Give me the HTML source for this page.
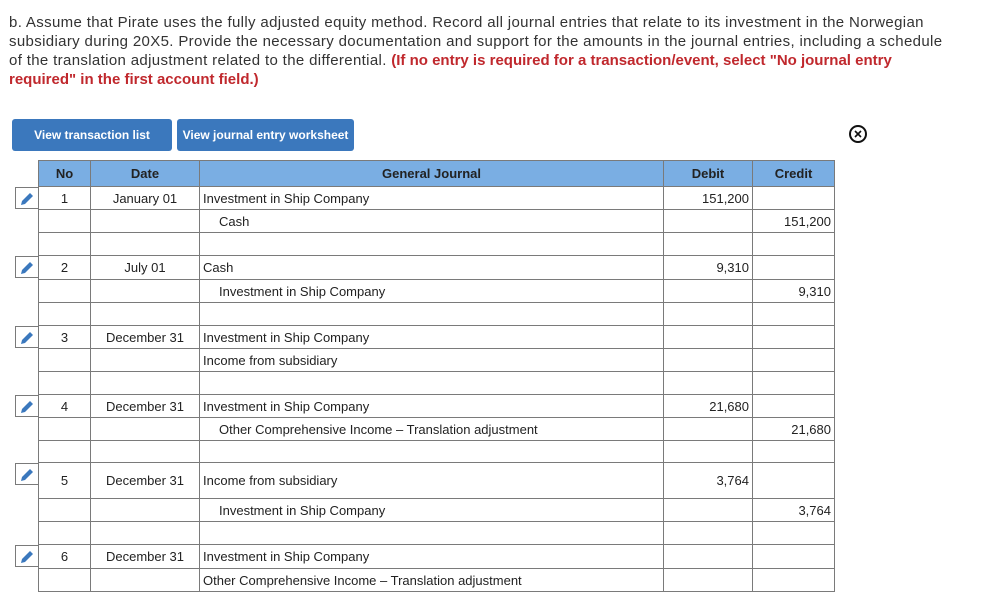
<!DOCTYPE html>
<html><head><meta charset="utf-8"><style>
body{margin:0;background:#fff;font-family:"Liberation Sans",Arial,sans-serif;}
.q{position:absolute;left:9px;top:13px;width:980px;font-size:15px;letter-spacing:0.35px;line-height:19px;color:#333;white-space:nowrap;}
.q b{color:#c0282d;letter-spacing:0;}
.btn{position:absolute;top:119px;height:32px;background:#3b78bd;color:#fff;font-weight:bold;font-size:12px;line-height:32px;text-align:center;border-radius:3px;}
table{position:absolute;left:15px;top:160px;border-collapse:collapse;font-size:13px;color:#222;table-layout:fixed;}
td,th{border:1px solid #7a7a7a;padding:0 3px;white-space:nowrap;overflow:hidden;}
th{background:#7aaee3;height:25px;font-weight:bold;}
td.p{border:none;padding:0;vertical-align:top;}
td.p div{width:23px;height:22px;border:1px solid #7a7a7a;border-right:none;box-sizing:border-box;position:relative;}
td.c{text-align:center}
td.r{text-align:right}
td.i{padding-left:19px}
</style></head><body>
<div class="q">b. Assume that Pirate uses the fully adjusted equity method. Record all journal entries that relate to its investment in the Norwegian<br>subsidiary during 20X5. Provide the necessary documentation and support for the amounts in the journal entries, including a schedule<br>of the translation adjustment related to the differential. <b>(If no entry is required for a transaction/event, select "No journal entry<br>required" in the first account field.)</b></div>
<div class="btn" style="left:12px;width:160px">View transaction list</div>
<div class="btn" style="left:177px;width:177px">View journal entry worksheet</div>
<svg style="position:absolute;left:848px;top:124px" width="20" height="20" viewBox="0 0 20 20"><circle cx="10" cy="10" r="8" fill="none" stroke="#111" stroke-width="2"/><path d="M7 7L13 13M13 7L7 13" stroke="#111" stroke-width="1.6"/></svg>
<table>
<colgroup><col style="width:23px"><col style="width:52px"><col style="width:109px"><col style="width:464px"><col style="width:89px"><col style="width:82px"></colgroup>
<tr><td class="p" style="border:none"></td><th>No</th><th>Date</th><th>General Journal</th><th>Debit</th><th>Credit</th></tr>
<tr style="height:23px"><td class="p"><div><svg width="16" height="16" style="position:absolute;left:3px;top:3px" viewBox="0 0 16 16"><path d="M2 14L3 10L11 2L14 5L6 13Z" fill="#3b78bd"/></svg></div></td><td class="c">1</td><td class="c">January 01</td><td>Investment in Ship Company</td><td class="r">151,200</td><td></td></tr>
<tr style="height:23px"><td class="p"></td><td></td><td></td><td class="i">Cash</td><td></td><td class="r">151,200</td></tr>
<tr style="height:23px"><td class="p"></td><td></td><td></td><td></td><td></td><td></td></tr>
<tr style="height:24px"><td class="p"><div><svg width="16" height="16" style="position:absolute;left:3px;top:3px" viewBox="0 0 16 16"><path d="M2 14L3 10L11 2L14 5L6 13Z" fill="#3b78bd"/></svg></div></td><td class="c">2</td><td class="c">July 01</td><td>Cash</td><td class="r">9,310</td><td></td></tr>
<tr style="height:23px"><td class="p"></td><td></td><td></td><td class="i">Investment in Ship Company</td><td></td><td class="r">9,310</td></tr>
<tr style="height:23px"><td class="p"></td><td></td><td></td><td></td><td></td><td></td></tr>
<tr style="height:23px"><td class="p"><div><svg width="16" height="16" style="position:absolute;left:3px;top:3px" viewBox="0 0 16 16"><path d="M2 14L3 10L11 2L14 5L6 13Z" fill="#3b78bd"/></svg></div></td><td class="c">3</td><td class="c">December 31</td><td>Investment in Ship Company</td><td></td><td></td></tr>
<tr style="height:23px"><td class="p"></td><td></td><td></td><td>Income from subsidiary</td><td></td><td></td></tr>
<tr style="height:23px"><td class="p"></td><td></td><td></td><td></td><td></td><td></td></tr>
<tr style="height:23px"><td class="p"><div><svg width="16" height="16" style="position:absolute;left:3px;top:3px" viewBox="0 0 16 16"><path d="M2 14L3 10L11 2L14 5L6 13Z" fill="#3b78bd"/></svg></div></td><td class="c">4</td><td class="c">December 31</td><td>Investment in Ship Company</td><td class="r">21,680</td><td></td></tr>
<tr style="height:23px"><td class="p"></td><td></td><td></td><td class="i">Other Comprehensive Income – Translation adjustment</td><td></td><td class="r">21,680</td></tr>
<tr style="height:22px"><td class="p"></td><td></td><td></td><td></td><td></td><td></td></tr>
<tr style="height:36px"><td class="p"><div><svg width="16" height="16" style="position:absolute;left:3px;top:3px" viewBox="0 0 16 16"><path d="M2 14L3 10L11 2L14 5L6 13Z" fill="#3b78bd"/></svg></div></td><td class="c">5</td><td class="c">December 31</td><td>Income from subsidiary</td><td class="r">3,764</td><td></td></tr>
<tr style="height:23px"><td class="p"></td><td></td><td></td><td class="i">Investment in Ship Company</td><td></td><td class="r">3,764</td></tr>
<tr style="height:23px"><td class="p"></td><td></td><td></td><td></td><td></td><td></td></tr>
<tr style="height:24px"><td class="p"><div><svg width="16" height="16" style="position:absolute;left:3px;top:3px" viewBox="0 0 16 16"><path d="M2 14L3 10L11 2L14 5L6 13Z" fill="#3b78bd"/></svg></div></td><td class="c">6</td><td class="c">December 31</td><td>Investment in Ship Company</td><td></td><td></td></tr>
<tr style="height:23px"><td class="p"></td><td></td><td></td><td>Other Comprehensive Income – Translation adjustment</td><td></td><td></td></tr>
</table>
</body></html>
